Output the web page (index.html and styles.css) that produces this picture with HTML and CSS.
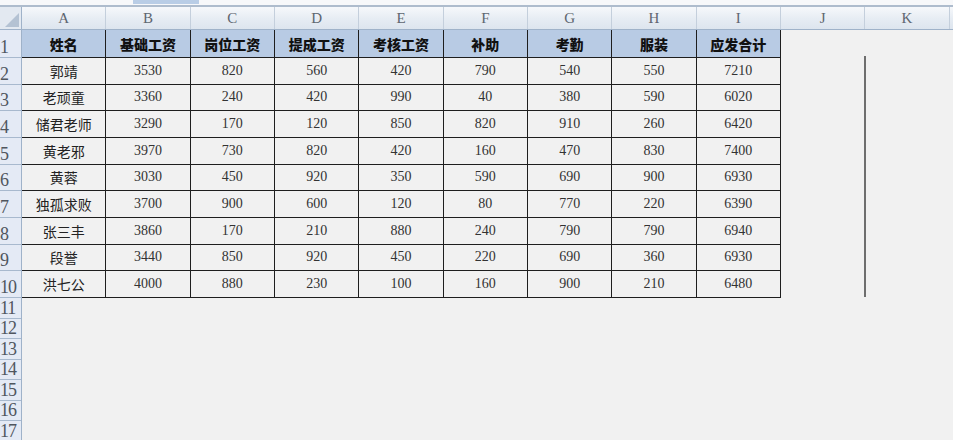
FILE: index.html
```html
<!DOCTYPE html>
<html lang="zh">
<head>
<meta charset="utf-8">
<title>工资表</title>
<link rel="stylesheet" href="styles.css">
</head>
<body>
<div class="app">
  <div class="topbar"><div class="tab"></div></div>
  <div class="colheads">
    <div class="corner"><span class="tri"></span></div>
    <div class="ch">A</div><div class="ch">B</div><div class="ch">C</div><div class="ch">D</div>
    <div class="ch">E</div><div class="ch">F</div><div class="ch">G</div><div class="ch">H</div>
    <div class="ch">I</div><div class="ch">J</div><div class="ch">K</div><div class="ch"></div>
  </div>
  <div class="body">
    <div class="rowheads">
      <div class="rh r1">1</div>
      <div class="rh rd">2</div><div class="rh rd">3</div><div class="rh rd">4</div>
      <div class="rh rd">5</div><div class="rh rd">6</div><div class="rh rd">7</div>
      <div class="rh rd">8</div><div class="rh rd">9</div><div class="rh rd">10</div>
      <div class="rh re">11</div><div class="rh re">12</div><div class="rh re">13</div>
      <div class="rh re">14</div><div class="rh re">15</div><div class="rh re">16</div>
      <div class="rh re">17</div>
    </div>
    <div class="cells">
      <div class="tbl">
        <div class="c h">姓名</div><div class="c h">基础工资</div><div class="c h">岗位工资</div><div class="c h">提成工资</div><div class="c h">考核工资</div><div class="c h">补助</div><div class="c h">考勤</div><div class="c h">服装</div><div class="c h">应发合计</div>
        <div class="c n">郭靖</div><div class="c">3530</div><div class="c">820</div><div class="c">560</div><div class="c">420</div><div class="c">790</div><div class="c">540</div><div class="c">550</div><div class="c">7210</div>
        <div class="c n">老顽童</div><div class="c">3360</div><div class="c">240</div><div class="c">420</div><div class="c">990</div><div class="c">40</div><div class="c">380</div><div class="c">590</div><div class="c">6020</div>
        <div class="c n">储君老师</div><div class="c">3290</div><div class="c">170</div><div class="c">120</div><div class="c">850</div><div class="c">820</div><div class="c">910</div><div class="c">260</div><div class="c">6420</div>
        <div class="c n">黄老邪</div><div class="c">3970</div><div class="c">730</div><div class="c">820</div><div class="c">420</div><div class="c">160</div><div class="c">470</div><div class="c">830</div><div class="c">7400</div>
        <div class="c n">黄蓉</div><div class="c">3030</div><div class="c">450</div><div class="c">920</div><div class="c">350</div><div class="c">590</div><div class="c">690</div><div class="c">900</div><div class="c">6930</div>
        <div class="c n">独孤求败</div><div class="c">3700</div><div class="c">900</div><div class="c">600</div><div class="c">120</div><div class="c">80</div><div class="c">770</div><div class="c">220</div><div class="c">6390</div>
        <div class="c n">张三丰</div><div class="c">3860</div><div class="c">170</div><div class="c">210</div><div class="c">880</div><div class="c">240</div><div class="c">790</div><div class="c">790</div><div class="c">6940</div>
        <div class="c n">段誉</div><div class="c">3440</div><div class="c">850</div><div class="c">920</div><div class="c">450</div><div class="c">220</div><div class="c">690</div><div class="c">360</div><div class="c">6930</div>
        <div class="c n">洪七公</div><div class="c">4000</div><div class="c">880</div><div class="c">230</div><div class="c">100</div><div class="c">160</div><div class="c">900</div><div class="c">210</div><div class="c">6480</div>
      </div>
      <div class="vline"></div>
    </div>
  </div>
</div>
</body>
</html>
```

FILE: styles.css
```css
html, body {
  margin: 0;
  padding: 0;
  width: 953px;
  height: 440px;
  overflow: hidden;
  background: #f1f1f1;
}
.app {
  width: 953px;
  height: 440px;
  overflow: hidden;
  font-family: "Liberation Serif", "Noto Sans CJK SC", serif;
}
.topbar {
  height: 5px;
  background: #f7f8fa;
  border-bottom: 2px solid #aebccd;
  box-sizing: content-box;
  position: relative;
}
.tab {
  position: absolute;
  left: 133px;
  top: 0;
  width: 66px;
  height: 4px;
  background: #b9cde6;
}
.colheads {
  display: flex;
  height: 22px;
  border-bottom: 1px solid #9fb2c9;
  background: linear-gradient(#f6f8fb, #e6ecf3 55%, #dde5ee);
}
.corner {
  width: 22px;
  flex: none;
  box-sizing: border-box;
  border-right: 1px solid #9fb2c9;
  position: relative;
  background: #e3e9f1;
}
.tri {
  position: absolute;
  right: 2px;
  bottom: 2px;
  width: 0;
  height: 0;
  border-left: 14px solid transparent;
  border-bottom: 14px solid #b4c2d3;
}
.ch {
  width: 84.33px;
  flex: none;
  box-sizing: border-box;
  border-right: 1px solid #c4cfdc;
  text-align: center;
  font-size: 15px;
  line-height: 23px;
  color: #5e6670;
}
.body {
  display: flex;
}
.rowheads {
  width: 22px;
  flex: none;
  background: #e4eaf5;
  box-sizing: border-box;
  border-right: 1px solid #9fb2c9;
}
.rh {
  box-sizing: border-box;
  border-bottom: 1px solid #a8b9ce;
  font-size: 18px;
  line-height: 18px;
  color: #50565e;
  padding-left: 0;
  display: flex;
  align-items: flex-end;
  padding-bottom: 1px;
  overflow: hidden;
  white-space: nowrap;
  letter-spacing: -1px;
}
.r1 { height: 28px; }
.rd { height: 26.67px; }
.re { height: 20.6px; }
.cells {
  position: relative;
  flex: 1;
}
.tbl {
  display: grid;
  grid-template-columns: repeat(9, 84.33px);
  grid-template-rows: 28px repeat(9, 26.67px);
  width: max-content;
}
.c {
  box-sizing: border-box;
  border-right: 1px solid #1e1e1e;
  border-bottom: 1px solid #1e1e1e;
  display: flex;
  align-items: center;
  justify-content: center;
  font-size: 14px;
  color: #333;
  background: #f1f1f1;
  font-family: "Liberation Serif", serif;
}
.c.h {
  background: #b8cbe4;
  font-family: "Noto Sans CJK SC", sans-serif;
  font-weight: 900;
  font-size: 14px;
  color: #111;
}
.c.n {
  font-family: "Noto Sans CJK SC", sans-serif;
  font-size: 14px;
  color: #222;
}
.vline {
  position: absolute;
  left: 842px;
  top: 26px;
  width: 2px;
  height: 241px;
  background: #6e6e6e;
}
```
